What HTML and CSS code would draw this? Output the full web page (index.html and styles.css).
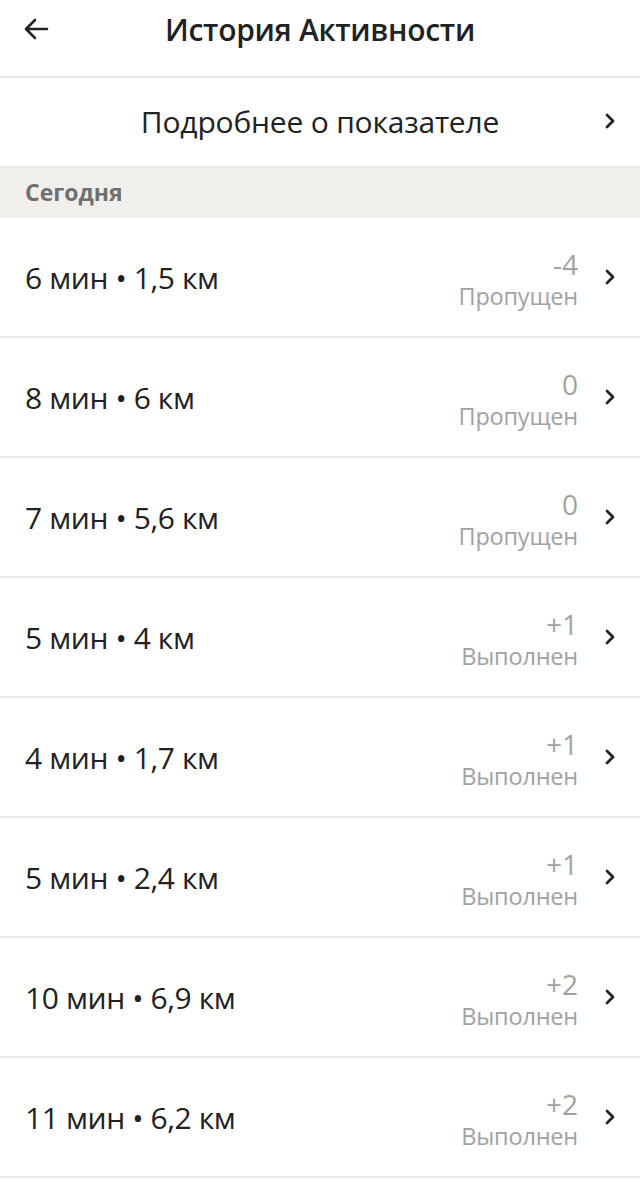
FILE: index.html
```html
<!DOCTYPE html>
<html lang="ru">
<head>
    <meta charset="UTF-8">
    <meta name="viewport" content="width=device-width, initial-scale=1.0">
    <title>История Активности</title>
    <link rel="stylesheet" href="styles.css">
</head>
<body>
    <div class="header">
        <button class="back">
            <svg width="28" height="24" viewBox="0 0 28 24"><path d="M25 12H4M13 3l-9 9 9 9" fill="none" stroke="#222" stroke-width="2.6" stroke-linecap="round" stroke-linejoin="round"/></svg>
        </button>
        <h1>История Активности</h1>
    </div>
    <div class="more">
        <span>Подробнее о показателе</span>
        <svg class="chevron" width="12" height="18" viewBox="0 0 12 18"><path d="M3 3l6 6-6 6" fill="none" stroke="#222" stroke-width="2.8" stroke-linecap="round" stroke-linejoin="round"/></svg>
    </div>
    <div class="section">Сегодня</div>
    <ul class="list">
        <li class="row">
            <span class="title">6 мин • 1,5 км</span>
            <div class="score"><span class="points">-4</span><span class="status">Пропущен</span></div>
            <svg class="chevron" width="12" height="18" viewBox="0 0 12 18"><path d="M3 3l6 6-6 6" fill="none" stroke="#222" stroke-width="2.8" stroke-linecap="round" stroke-linejoin="round"/></svg>
        </li>
        <li class="row">
            <span class="title">8 мин • 6 км</span>
            <div class="score"><span class="points">0</span><span class="status">Пропущен</span></div>
            <svg class="chevron" width="12" height="18" viewBox="0 0 12 18"><path d="M3 3l6 6-6 6" fill="none" stroke="#222" stroke-width="2.8" stroke-linecap="round" stroke-linejoin="round"/></svg>
        </li>
        <li class="row">
            <span class="title">7 мин • 5,6 км</span>
            <div class="score"><span class="points">0</span><span class="status">Пропущен</span></div>
            <svg class="chevron" width="12" height="18" viewBox="0 0 12 18"><path d="M3 3l6 6-6 6" fill="none" stroke="#222" stroke-width="2.8" stroke-linecap="round" stroke-linejoin="round"/></svg>
        </li>
        <li class="row">
            <span class="title">5 мин • 4 км</span>
            <div class="score"><span class="points">+1</span><span class="status">Выполнен</span></div>
            <svg class="chevron" width="12" height="18" viewBox="0 0 12 18"><path d="M3 3l6 6-6 6" fill="none" stroke="#222" stroke-width="2.8" stroke-linecap="round" stroke-linejoin="round"/></svg>
        </li>
        <li class="row">
            <span class="title">4 мин • 1,7 км</span>
            <div class="score"><span class="points">+1</span><span class="status">Выполнен</span></div>
            <svg class="chevron" width="12" height="18" viewBox="0 0 12 18"><path d="M3 3l6 6-6 6" fill="none" stroke="#222" stroke-width="2.8" stroke-linecap="round" stroke-linejoin="round"/></svg>
        </li>
        <li class="row">
            <span class="title">5 мин • 2,4 км</span>
            <div class="score"><span class="points">+1</span><span class="status">Выполнен</span></div>
            <svg class="chevron" width="12" height="18" viewBox="0 0 12 18"><path d="M3 3l6 6-6 6" fill="none" stroke="#222" stroke-width="2.8" stroke-linecap="round" stroke-linejoin="round"/></svg>
        </li>
        <li class="row">
            <span class="title">10 мин • 6,9 км</span>
            <div class="score"><span class="points">+2</span><span class="status">Выполнен</span></div>
            <svg class="chevron" width="12" height="18" viewBox="0 0 12 18"><path d="M3 3l6 6-6 6" fill="none" stroke="#222" stroke-width="2.8" stroke-linecap="round" stroke-linejoin="round"/></svg>
        </li>
        <li class="row">
            <span class="title">11 мин • 6,2 км</span>
            <div class="score"><span class="points">+2</span><span class="status">Выполнен</span></div>
            <svg class="chevron" width="12" height="18" viewBox="0 0 12 18"><path d="M3 3l6 6-6 6" fill="none" stroke="#222" stroke-width="2.8" stroke-linecap="round" stroke-linejoin="round"/></svg>
        </li>
    </ul>
</body>
</html>
```

FILE: styles.css
```css
body {
    margin: 0;
    background: #fff;
    color: #222;
    font-family: "Open Sans", "Noto Sans", sans-serif;
}
.header {
    height: 78px;
    display: flex;
    align-items: center;
    justify-content: center;
    position: relative;
    border-bottom: 2px solid #e8e8e6;
    box-sizing: border-box;
    padding-bottom: 18px;
}
.back {
    position: absolute;
    left: 22px;
    top: 17px;
    border: none;
    background: none;
    padding: 0;
    display: flex;
}
.header h1 {
    margin: 0;
    font-size: 30px;
    font-weight: 600;
    letter-spacing: -0.3px;
}
.more {
    height: 90px;
    display: flex;
    align-items: center;
    justify-content: center;
    position: relative;
    font-size: 30px;
    border-bottom: 2px solid #e8e8e6;
    box-sizing: border-box;
    letter-spacing: -0.2px;
    padding-bottom: 2px;
}
.more .chevron {
    position: absolute;
    right: 24px;
}
.section {
    height: 50px;
    background: #f0efec;
    color: #707070;
    font-size: 23px;
    font-weight: 700;
    padding-left: 25px;
    display: flex;
    align-items: center;
    box-sizing: border-box;
    padding-bottom: 2px;
}
.list {
    list-style: none;
    margin: 0;
    padding: 0;
}
.row {
    height: 120px;
    display: flex;
    align-items: center;
    padding: 0 24px 0 25px;
    border-bottom: 2px solid #e8e8e6;
    box-sizing: border-box;
}
.title {
    flex: 1;
    font-size: 30px;
    letter-spacing: -0.4px;
}
.score {
    display: flex;
    flex-direction: column;
    align-items: flex-end;
    color: #a2a2a2;
    margin-right: 26px;
    margin-top: 6px;
}
.points {
    font-size: 28px;
    line-height: 32px;
}
.status {
    font-size: 23.5px;
    line-height: 33px;
    letter-spacing: -0.2px;
}
```
